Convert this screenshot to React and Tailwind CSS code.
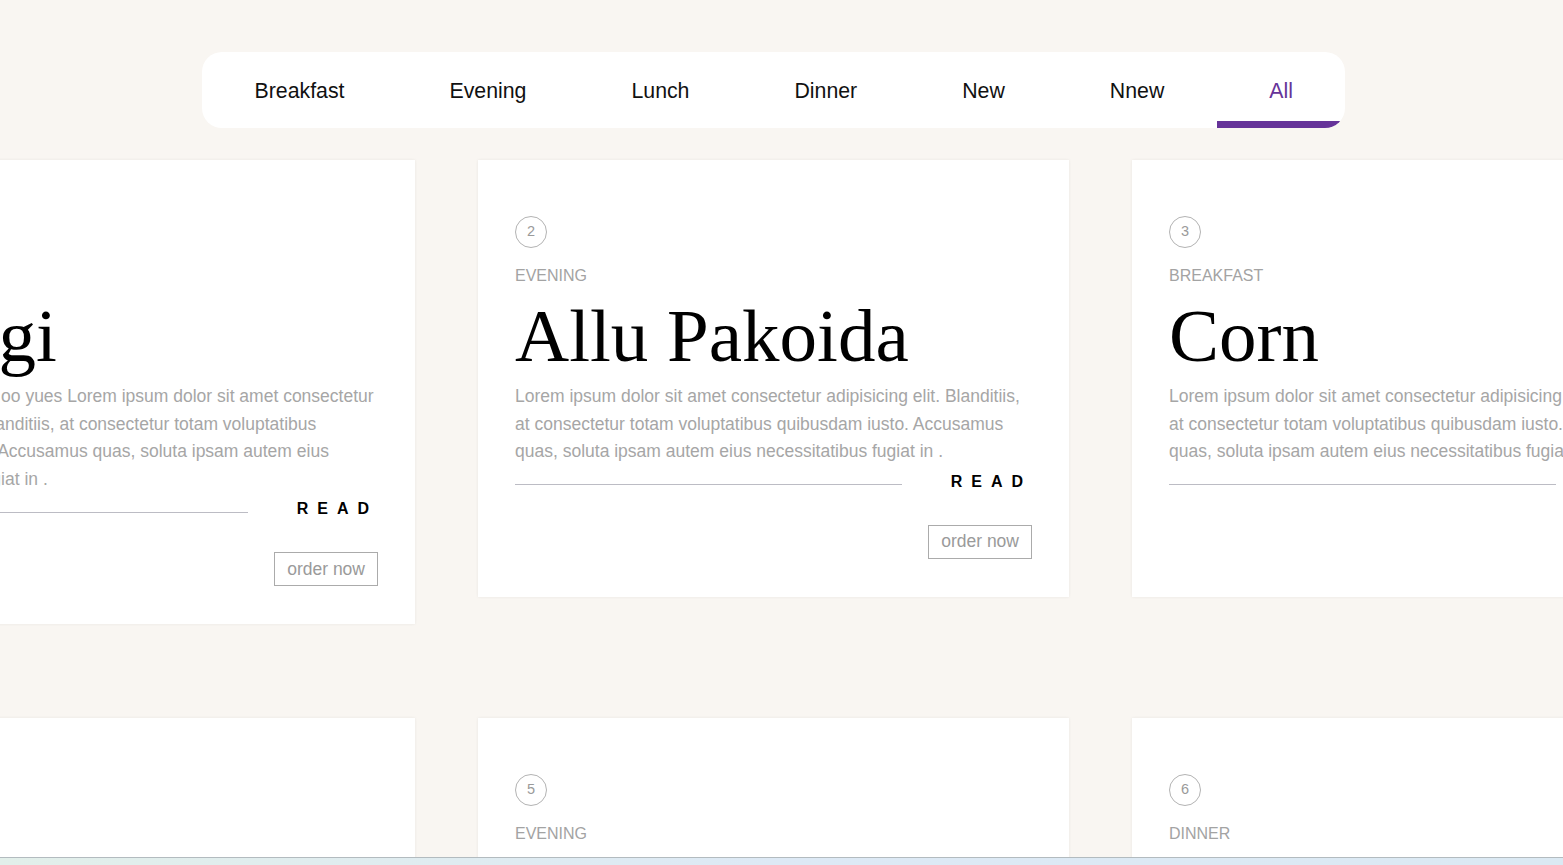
import React from "react";

const tabs = ["Breakfast", "Evening", "Lunch", "Dinner", "New", "Nnew", "All"];

const baseDesc =
  "Lorem ipsum dolor sit amet consectetur adipisicing elit. Blanditiis, at consectetur totam voluptatibus quibusdam iusto. Accusamus quas, soluta ipsam autem eius necessitatibus fugiat in .";

const row1 = [
  { num: 1, cat: "Lunch", title: "Mangi", desc: "Lorem ipsum fata oo yues " + baseDesc },
  { num: 2, cat: "Evening", title: "Allu Pakoida", desc: baseDesc },
  { num: 3, cat: "Breakfast", title: "Corn", desc: baseDesc },
];

const row2 = [
  { num: 4, cat: "Lunch", title: "Samosa", desc: baseDesc },
  { num: 5, cat: "Evening", title: "Dosa", desc: baseDesc },
  { num: 6, cat: "Dinner", title: "Paneer", desc: baseDesc },
];

function Card({ num, cat, title, desc }) {
  return (
    <div className="w-[591px] shrink-0 bg-white px-[37px] pt-[56px] pb-[38px] shadow-[0_0_3px_rgba(0,0,0,0.07)]">
      <div className="w-[32px] h-[32px] rounded-full border border-[#b3b3b3] flex items-center justify-center text-[14.5px] text-[#9a9a9a]">
        {num}
      </div>
      <div className="mt-[19px] text-[16px] leading-[18px] text-[#a3a3a3] uppercase">{cat}</div>
      <h2 className="mt-[13px] font-['Liberation_Serif','Times_New_Roman',serif] text-[75px] leading-[75px] text-black whitespace-nowrap">
        {title}
      </h2>
      <p className="mt-[10px] text-[17.5px] leading-[27.5px] text-[#a6a6a6]">{desc}</p>
      <div className="mt-[6px] flex items-center h-[20px]">
        <div className="flex-1 h-px bg-[#bcbcc4] translate-y-[3px]"></div>
        <span className="ml-[49px] text-[16px] font-bold tracking-[9px] text-black">READ</span>
      </div>
      <div className="mt-[33px] flex justify-end">
        <button className="h-[34px] px-[12px] border border-[#ababab] text-[17.5px] text-[#9a9a9a] bg-white">
          order now
        </button>
      </div>
    </div>
  );
}

export default function App() {
  return (
    <div className="relative h-screen overflow-hidden bg-[#f9f6f2] font-['Liberation_Sans',Arial,sans-serif]">
      <div className="pt-[52px] pl-[202px]">
        <nav className="relative inline-flex h-[76px] bg-white rounded-[20px] overflow-hidden">
          {tabs.map((t) => {
            const active = t === "All";
            return (
              <div
                key={t}
                className={
                  active
                    ? "relative flex items-center pt-[3px] px-[52.5px] text-[21.3px] text-[#663399]"
                    : "relative flex items-center pt-[3px] px-[52.5px] text-[21.3px] text-[#111111]"
                }
              >
                {t}
                {active && <span className="absolute left-0 right-0 bottom-0 h-[7px] bg-[#663399]" />}
              </div>
            );
          })}
        </nav>
      </div>

      <div className="mt-[32px] ml-[-176px] flex gap-[63px] items-start">
        {row1.map((c) => (
          <Card key={c.num} {...c} />
        ))}
      </div>
      <div className="mt-[94px] ml-[-176px] flex gap-[63px] items-start">
        {row2.map((c) => (
          <Card key={c.num} {...c} />
        ))}
      </div>

      <div className="fixed left-0 right-0 bottom-0 h-[8px] border-t border-[#b3bbbf] bg-gradient-to-r from-[#e2efea] via-[#dde9f5] to-[#dbe9f3]" />
    </div>
  );
}
